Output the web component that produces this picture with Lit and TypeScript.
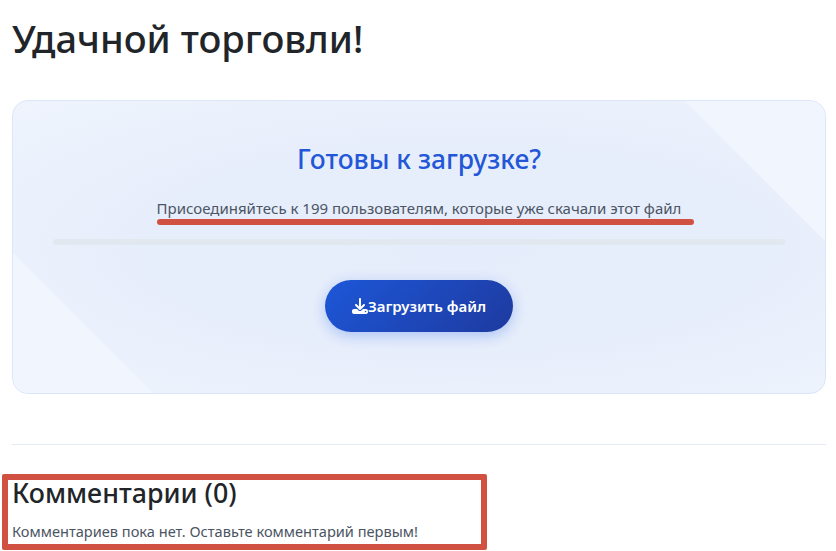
import { LitElement, html, css } from 'lit';
import { customElement } from 'lit/decorators.js';

@customElement('app-root')
export class AppRoot extends LitElement {
    static override styles = css`
        :host {
            display: block;
            position: relative;
            height: 551px;
            overflow: hidden;
            box-sizing: border-box;
            padding: 11px 10px 0 12px;
            background: #fff;
            font-family: "Noto Sans", "Open Sans", sans-serif;
            color: #212529;
        }

        h1 {
            margin: 0 0 35px;
            font-size: 38px;
            line-height: 54px;
            font-weight: 500;
            color: #212529;
        }

        .card {
            position: relative;
            overflow: hidden;
            box-sizing: border-box;
            height: 294px;
            padding: 38px 40px 0;
            border: 1px solid #dbe6fa;
            border-radius: 16px;
            background: radial-gradient(ellipse at 55% 50%, #e5ecfb 0%, #e7eefb 50%, #eff4fd 100%);
            text-align: center;
        }

        /* pale diagonal corners */
        .card::before,
        .card::after {
            content: '';
            position: absolute;
            width: 260px;
            height: 260px;
            background: #f1f5fe;
        }
        .card::before {
            top: -60px;
            right: -60px;
            clip-path: polygon(0 0, 100% 0, 100% 100%);
        }
        .card::after {
            left: -60px;
            bottom: -60px;
            clip-path: polygon(0 0, 100% 100%, 0 100%);
        }

        .card > * {
            position: relative;
            z-index: 1;
        }

        h2 {
            margin: 0 0 18px;
            font-size: 26.400px;
            line-height: 40px;
            font-weight: 500;
            color: #2357d8;
        }

        .lead {
            margin: 0 0 20px;
            font-size: 15px;
            line-height: 22px;
            color: #4b5563;
        }

        .track {
            height: 6px;
            margin-bottom: 35px;
            border-radius: 3px;
            background: #e2e8f0;
        }

        .btn {
            display: inline-flex;
            align-items: center;
            height: 52px;
            box-sizing: border-box;
            padding: 0 27px;
            border: 0;
            border-radius: 26px;
            background: linear-gradient(135deg, #1d57d8, #1e3a9f);
            box-shadow: 0 4px 14px rgba(37, 99, 235, 0.3);
            color: #fff;
            font-family: inherit;
            font-size: 15px;
            font-weight: 600;
        }

        .btn svg {
            width: 16px;
            height: 16px;
            fill: currentColor;
        }

        hr {
            height: 1px;
            margin: 50px 0 0;
            border: 0;
            background: #e5ebf5;
        }

        .comments {
            margin-top: 30px;
        }

        h3 {
            margin: 0 0 10px;
            font-size: 26.800px;
            line-height: 36px;
            font-weight: 500;
        }

        .empty {
            margin: 0;
            font-size: 14.600px;
            line-height: 20px;
            color: #4b5563;
        }

        /* markup drawn on top of the screenshot */
        .mark-line {
            position: absolute;
            left: 157px;
            top: 219px;
            width: 537px;
            height: 6px;
            border-radius: 3px;
            background: #d05142;
        }

        .mark-box {
            position: absolute;
            left: 2px;
            top: 474px;
            width: 485px;
            height: 76px;
            box-sizing: border-box;
            border: 6px solid #d05142;
            border-radius: 2px;
        }
    `;

    override render() {
        return html`
            <h1>Удачной торговли!</h1>
            <section class="card">
                <h2>Готовы к загрузке?</h2>
                <p class="lead">Присоединяйтесь к 199 пользователям, которые уже скачали этот файл</p>
                <div class="track"></div>
                <button class="btn">
                    <svg viewBox="0 0 512 512" aria-hidden="true">
                        <path
                            d="M288 32c0-17.700-14.300-32-32-32s-32 14.300-32 32v242.700l-73.400-73.400c-12.500-12.500-32.800-12.500-45.300 0s-12.500 32.800 0 45.300l128 128c12.500 12.500 32.800 12.500 45.300 0l128-128c12.500-12.500 12.500-32.800 0-45.300s-32.800-12.500-45.300 0L288 274.700V32zM64 352c-35.300 0-64 28.700-64 64v32c0 35.300 28.700 64 64 64h384c35.300 0 64-28.700 64-64v-32c0-35.300-28.700-64-64-64H346.500l-45.300 45.300c-25 25-65.500 25-90.500 0L165.500 352H64zm368 56a24 24 0 1 1 0 48 24 24 0 1 1 0-48z"
                        />
                    </svg>
                    Загрузить файл
                </button>
            </section>
            <hr />
            <section class="comments">
                <h3>Комментарии (0)</h3>
                <p class="empty">Комментариев пока нет. Оставьте комментарий первым!</p>
            </section>
            <div class="mark-line"></div>
            <div class="mark-box"></div>
        `;
    }
}
